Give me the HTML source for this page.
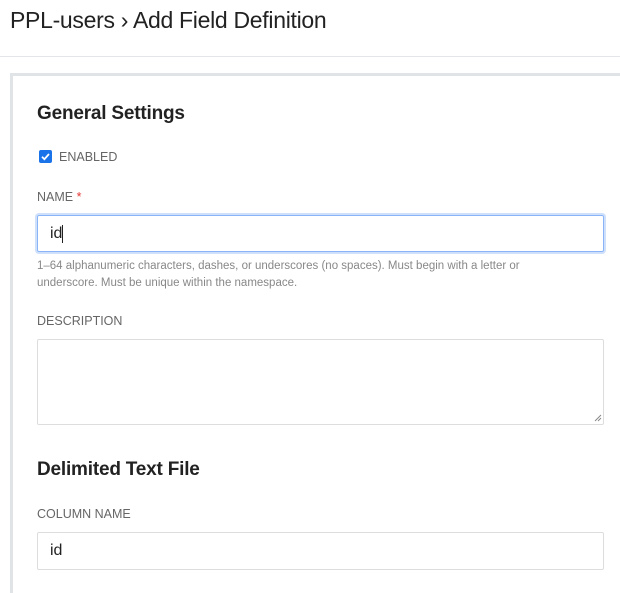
<!DOCTYPE html>
<html><head><style>
body{margin:0;width:620px;height:585px;overflow:hidden;background:#fff;font-family:"Liberation Sans",sans-serif;position:relative}
.a{position:absolute;white-space:nowrap}
h1{position:absolute;left:10px;top:7px;margin:0;font-size:23px;font-weight:normal;color:#222;letter-spacing:-0.3px}
.hr{position:absolute;left:0;top:56px;width:620px;height:1px;background:#e3e5e8}
.card{position:absolute;left:10px;top:73px;width:620px;height:520px;border-left:3px solid #e1e4e7;border-top:3px solid #e1e4e7;box-sizing:border-box}
h2{position:absolute;margin:0;font-size:19px;font-weight:bold;color:#222;left:37px;letter-spacing:-0.2px}
.lbl{position:absolute;left:37px;font-size:12.5px;color:#666}
.inp{position:absolute;left:37px;width:567px;box-sizing:border-box;border:1px solid #ddd;border-radius:2px;font-size:16px;color:#222;padding-left:12px}
.help{position:absolute;left:37px;font-size:11.5px;color:#888;line-height:17px}
</style></head><body>
<h1>PPL-users › Add Field Definition</h1>
<div class="hr"></div>
<div class="card"></div>
<h2 style="top:103px">General Settings</h2>
<div class="a" style="left:39px;top:150px;width:13px;height:13px;background:#1a73e8;border-radius:2px">
<svg width="13" height="13" viewBox="0 0 13 13"><path d="M3 6.8l2.4 2.4L10 4" stroke="#fff" stroke-width="1.8" fill="none"/></svg></div>
<div class="lbl" style="left:59px;top:150px">ENABLED</div>
<div class="lbl" style="top:190px">NAME <span style="color:#e53935">*</span></div>
<div class="inp" style="top:215px;height:37px;border:1px solid #8ab4f8;box-shadow:0 0 0 2px #cfe0fb;line-height:35px">id<span style="display:inline-block;width:1px;height:18px;background:#222;vertical-align:middle"></span></div>
<div class="help" style="top:258px">1–64 alphanumeric characters, dashes, or underscores (no spaces). Must begin with a letter or<br>underscore. Must be unique within the namespace.</div>
<div class="lbl" style="top:314px">DESCRIPTION</div>
<div class="inp" style="top:339px;height:86px"></div>
<svg class="a" style="left:594px;top:414px" width="8" height="8"><path d="M1 7L7 1M4 7L7 4" stroke="#888" stroke-width="1"/></svg>
<h2 style="top:459px">Delimited Text File</h2>
<div class="lbl" style="top:507px">COLUMN NAME</div>
<div class="inp" style="top:532px;height:38px;line-height:36px">id</div>
</body></html>
